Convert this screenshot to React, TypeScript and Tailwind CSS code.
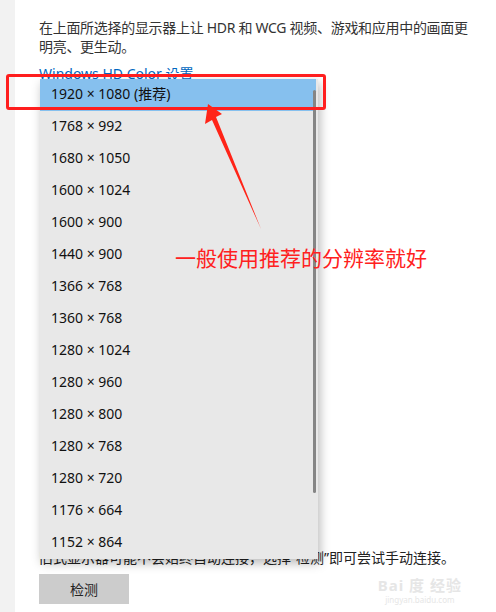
const resolutions = [
  '1920 × 1080 (推荐)',
  '1768 × 992',
  '1680 × 1050',
  '1600 × 1024',
  '1600 × 900',
  '1440 × 900',
  '1366 × 768',
  '1360 × 768',
  '1280 × 1024',
  '1280 × 960',
  '1280 × 800',
  '1280 × 768',
  '1280 × 720',
  '1176 × 664',
  '1152 × 864',
];

const cjk = "font-['Segoe_UI','Noto_Sans','Noto_Sans_CJK_SC',sans-serif]";

function Arrow() {
  return (
    <svg className="absolute left-0 top-0" width="496" height="612" viewBox="0 0 496 612">
      <polygon points="208,104 222,114 216,117 261,229 212,120 205,124" fill="#ff2418" />
    </svg>
  );
}

export default function App() {
  return (
    <div className={`relative flex w-[496px] h-[612px] overflow-hidden bg-white ${cjk}`}>
      <div className="w-[15px] shrink-0 bg-[#f2f2f2]" />

      <div className="flex flex-col pl-[24px] pt-[18px] text-[14px] text-[#333]">
        <p className="leading-[19px] whitespace-nowrap tracking-[-0.3px]">
          在上面所选择的显示器上让 HDR 和 WCG 视频、游戏和应用中的画面更
          <br />
          明亮、更生动。
        </p>
        <a className="mt-[8px] leading-[19px] text-[#0067c0]">Windows HD Color 设置</a>

        <p className="mt-[465px] leading-[19px] whitespace-nowrap text-[#222]">
          旧式显示器可能不会始终自动连接，选择“检测”即可尝试手动连接。
        </p>
        <button className="mt-[7px] flex h-[30px] w-[90px] items-center justify-center bg-[#cccccc] text-[14px] text-[#222]">
          检测
        </button>
      </div>

      <div className="absolute right-[34px] bottom-[8px] flex flex-col items-center gap-[2px] text-[#e6e6e6]">
        <span className="text-[15px] font-bold leading-[16px] tracking-[1px]">Bai 度 经验</span>
        <span className="text-[8px] leading-[9px]">jingyan.baidu.com</span>
      </div>

      <div className="absolute left-[40px] top-[79px] w-[278px] bg-[#e8e8e8] shadow-[2px_4px_10px_rgba(0,0,0,0.28)]">
        {resolutions.map((r, i) => (
          <div
            key={r}
            className={`flex h-[32px] items-center pl-[11px] pb-[3px] text-[14px] text-[#111] ${i === 0 ? 'bg-[#86c0ee] mr-[2px]' : ''}`}
          >
            {r}
          </div>
        ))}
        <div className="absolute right-[2px] top-[11px] h-[403px] w-[3px] rounded-full bg-[#858585]" />
      </div>

      <div className="absolute left-[6px] top-[74px] h-[36px] w-[320px] rounded-[3px] border-[3px] border-[#ff1e1e]" />

      <Arrow />

      <div className="absolute left-[175px] top-[244px] text-[21px] leading-[26px] text-[#ff2020] whitespace-nowrap font-['Noto_Sans_CJK_SC',sans-serif]">
        一般使用推荐的分辨率就好
      </div>
    </div>
  );
}
